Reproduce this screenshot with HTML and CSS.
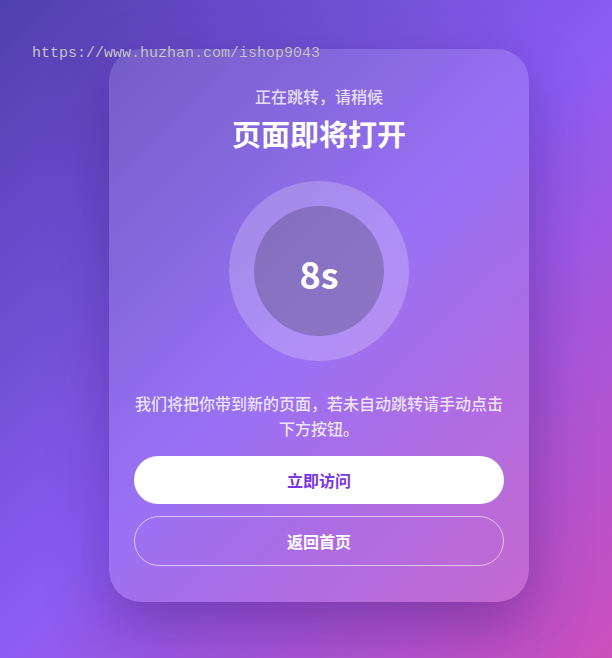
FILE: index.html
```html
<!DOCTYPE html>
<html lang="zh-CN">
<head>
<meta charset="utf-8">
<title>正在跳转</title>
<link rel="stylesheet" href="styles.css">
</head>
<body>
<div class="watermark">https://www.huzhan.com/ishop9043</div>
<main class="card">
  <p class="subtitle">正在跳转，请稍候</p>
  <h1 class="title">页面即将打开</h1>
  <div class="ring">
    <div class="ring-inner"><span class="count">8s</span></div>
  </div>
  <p class="desc">我们将把你带到新的页面，若未自动跳转请手动点击下方按钮。</p>
  <div class="actions">
    <a class="btn btn-primary" href="#">立即访问</a>
    <a class="btn btn-outline" href="#">返回首页</a>
  </div>
</main>
</body>
</html>
```
FILE: styles.css
```css
* { box-sizing: border-box; }
html, body { height: 100%; }
body {
  margin: 0;
  min-height: 658px;
  background: linear-gradient(135deg, #4f3fac 0%, #8a5cf3 50%, #cb4fbc 100%);
  font-family: "Noto Sans CJK SC", "Noto Sans", sans-serif;
  display: flex;
  align-items: center;
  justify-content: center;
  padding: 0 0 7px 26px;
  position: relative;
  overflow: hidden;
}
.watermark {
  position: absolute;
  left: 32px;
  top: 44px;
  font-family: "Liberation Mono", "DejaVu Sans Mono", monospace;
  font-size: 15px;
  line-height: 20px;
  color: #cbc6d8;
  text-shadow: 0 0 1px rgba(60,40,100,0.6);
  z-index: 2;
}
.card {
  width: 420px;
  padding: 35px 25px 36px;
  border-radius: 32px;
  background: rgba(255,255,255,0.13);
  box-shadow: 0 24px 60px rgba(40,10,90,0.35);
  display: flex;
  flex-direction: column;
  align-items: center;
  color: #fff;
}
.subtitle {
  margin: 0;
  font-size: 16px;
  line-height: 24px;
  font-weight: 500;
  color: rgba(255,255,255,0.8);
}
.title {
  margin: 5px 0 0;
  font-size: 29px;
  line-height: 40px;
  font-weight: 700;
}
.ring {
  margin-top: 28px;
  width: 180px;
  height: 180px;
  border-radius: 50%;
  background: rgba(255,255,255,0.22);
  padding: 25px;
}
.ring-inner {
  width: 100%;
  height: 100%;
  border-radius: 50%;
  background: rgba(30,30,50,0.25);
  display: flex;
  align-items: center;
  justify-content: center;
}
.count {
  font-size: 36px;
  font-weight: 700;
  line-height: 1;
  margin-top: 4px;
}
.desc {
  margin: 30px 0 0;
  font-size: 16px;
  line-height: 25px;
  font-weight: 500;
  text-align: center;
  color: rgba(255,255,255,0.82);
}
.actions {
  margin-top: 15px;
  width: 100%;
  display: flex;
  flex-direction: column;
  gap: 12px;
}
.btn {
  display: flex;
  align-items: center;
  justify-content: center;
  height: 48px;
  border-radius: 25px;
  font-size: 16px;
  font-weight: 700;
  text-decoration: none;
}
.btn-primary {
  background: #fff;
  color: #7a36e6;
}
.btn-outline {
  height: 50px;
  border: 1px solid rgba(255,255,255,0.6);
  color: #fff;
}
```
